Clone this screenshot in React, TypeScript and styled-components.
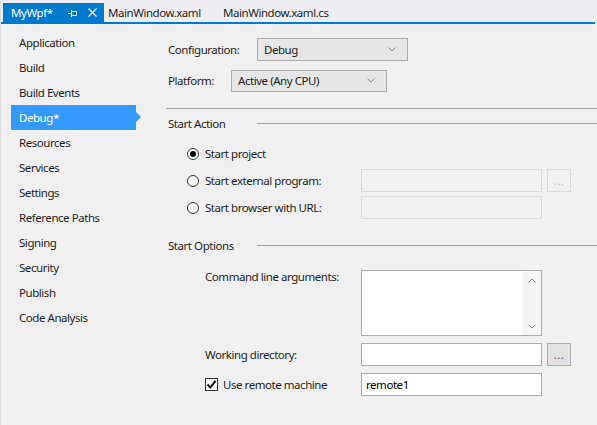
import * as React from 'react';
import styled, { createGlobalStyle } from 'styled-components';

const GlobalStyle = createGlobalStyle`
  html, body {
    margin: 0;
    padding: 0;
    background: #f0f0f0;
  }
`;

const pages = [
  'Application',
  'Build',
  'Build Events',
  'Debug*',
  'Resources',
  'Services',
  'Settings',
  'Reference Paths',
  'Signing',
  'Security',
  'Publish',
  'Code Analysis',
];

const Chevron = ({ up }: { up?: boolean }) => (
  <svg width="8" height="5" viewBox="0 0 8 5">
    <path
      d={up ? 'M0.5 4.5 L4 1 L7.5 4.5' : 'M0.5 0.5 L4 4 L7.5 0.5'}
      fill="none"
      stroke="#8a8a8a"
      strokeWidth="1"
    />
  </svg>
);

export default function App() {
  return (
    <>
      <GlobalStyle />
      <Window>
        <TabStrip>
          <ActiveTab>
            <TabTitle>MyWpf*</TabTitle>
            <TabIcon $gap={11}>
              <svg width="9" height="8" viewBox="0 0 9 8">
                <path
                  d="M0 4.5 H3 M3.5 1 V8 M3.5 2.5 H8.5 V6.5 H3.5"
                  fill="none"
                  stroke="#fff"
                  strokeWidth="1"
                />
              </svg>
            </TabIcon>
            <TabIcon $gap={7}>
              <svg width="9" height="9" viewBox="0 0 9 9">
                <path d="M0.5 0.5 L8.5 8.5 M8.5 0.5 L0.5 8.5" stroke="#fff" strokeWidth="1.2" />
              </svg>
            </TabIcon>
          </ActiveTab>
          <Tab $w={115}>MainWindow.xaml</Tab>
          <Tab>MainWindow.xaml.cs</Tab>
        </TabStrip>

        <Body>
          <Sidebar>
            {pages.map(p => (
              <NavItem key={p} $selected={p === 'Debug*'}>
                {p}
              </NavItem>
            ))}
          </Sidebar>

          <Content>
            <Row $top={14}>
              <Label $w={89}>Configuration:</Label>
              <Dropdown $w={151} $h={23}>
                <span>Debug</span>
                <Chevron />
              </Dropdown>
            </Row>
            <Row $top={8}>
              <Label $w={63}>Platform:</Label>
              <Dropdown $w={156} $h={22}>
                <span>Active (Any CPU)</span>
                <Chevron />
              </Dropdown>
            </Row>

            <Separator />

            <SectionHeader $top={6}>
              <SectionTitle>Start Action</SectionTitle>
            </SectionHeader>

            <Row $top={11} $indent={19}>
              <RadioLabel>
                <Radio $checked />
                Start project
              </RadioLabel>
            </Row>
            <Row $top={4} $indent={19}>
              <RadioLabel>
                <Radio />
                Start external program:
              </RadioLabel>
              <TextBox $w={181} $h={23} $state="disabled" />
              <BrowseButton $disabled>...</BrowseButton>
            </Row>
            <Row $top={4} $indent={19}>
              <RadioLabel>
                <Radio />
                Start browser with URL:
              </RadioLabel>
              <TextBox $w={181} $h={23} $state="disabled" />
            </Row>

            <SectionHeader $top={18}>
              <SectionTitle>Start Options</SectionTitle>
            </SectionHeader>

            <Row $top={17} $indent={37} $align="flex-start">
              <Label $w={156} $lift>
                Command line arguments:
              </Label>
              <TextArea>
                <TextAreaBody />
                <ScrollBar>
                  <Chevron up />
                  <Chevron />
                </ScrollBar>
              </TextArea>
            </Row>
            <Row $top={7} $indent={37}>
              <Label $w={156}>Working directory:</Label>
              <TextBox $w={181} $h={23} $state="normal" />
              <BrowseButton>...</BrowseButton>
            </Row>
            <Row $top={7} $indent={37}>
              <CheckLabel>
                <CheckBox>
                  <svg width="11" height="11" viewBox="0 0 11 11">
                    <path d="M1.5 5.5 L4.2 8.5 L9.5 1.8" fill="none" stroke="#000" strokeWidth="2" />
                  </svg>
                </CheckBox>
                Use remote machine
              </CheckLabel>
              <TextBox $w={181} $h={23} $state="focused">
                remote1
              </TextBox>
            </Row>
          </Content>
        </Body>
      </Window>
    </>
  );
}

const Window = styled.div`
  width: 597px;
  height: 425px;
  box-sizing: border-box;
  border-left: 1px solid #dcdcdc;
  background: #f0f0f0;
  display: flex;
  flex-direction: column;
  overflow: hidden;
  font-family: 'Segoe UI', 'Noto Sans', 'Open Sans', sans-serif;
  font-size: 11.5px;
  letter-spacing: -0.45px;
  color: #1e1e1e;
`;

const TabStrip = styled.div`
  display: flex;
  align-items: stretch;
  height: 19px;
  padding: 3px 0 0 2px;
  margin-right: 2px;
  border-bottom: 2px solid #007acc;
  background: #eeeef2;
`;

const ActiveTab = styled.div`
  display: flex;
  align-items: center;
  width: 101px;
  box-sizing: border-box;
  padding-left: 8px;
  background: #007acc;
  color: #fff;
`;

const TabTitle = styled.span`
  flex: 1;
`;

const TabIcon = styled.span<{ $gap: number }>`
  display: flex;
  margin-right: ${p => p.$gap}px;
`;

const Tab = styled.div<{ $w?: number }>`
  display: flex;
  align-items: center;
  width: ${p => (p.$w ? `${p.$w}px` : 'auto')};
  box-sizing: border-box;
  padding-left: 4px;
  color: #1e1e1e;
`;

const Body = styled.div`
  flex: 1;
  display: flex;
`;

const Sidebar = styled.div`
  width: 149px;
  padding-top: 6px;
  display: flex;
  flex-direction: column;
`;

const NavItem = styled.div<{ $selected?: boolean }>`
  position: relative;
  width: 125px;
  height: 25px;
  line-height: 25px;
  margin-left: 10px;
  padding-left: 8px;
  box-sizing: border-box;
  background: ${p => (p.$selected ? '#3399ff' : 'transparent')};
  color: ${p => (p.$selected ? '#fff' : '#1e1e1e')};

  &::after {
    content: '';
    display: ${p => (p.$selected ? 'block' : 'none')};
    position: absolute;
    right: -5px;
    top: 7px;
    border-left: 5px solid #3399ff;
    border-top: 5px solid transparent;
    border-bottom: 5px solid transparent;
  }
`;

const Content = styled.div`
  flex: 1;
  display: flex;
  flex-direction: column;
  padding-left: 18px;
`;

const Row = styled.div<{ $top: number; $indent?: number; $align?: string }>`
  display: flex;
  align-items: ${p => p.$align ?? 'center'};
  margin-top: ${p => p.$top}px;
  padding-left: ${p => p.$indent ?? 0}px;
  min-height: 23px;
`;

const Label = styled.span<{ $w: number; $lift?: boolean }>`
  width: ${p => p.$w}px;
  flex: none;
  line-height: 16px;
  margin-top: ${p => (p.$lift ? -1 : 0)}px;
`;

const Dropdown = styled.div<{ $w: number; $h: number }>`
  width: ${p => p.$w}px;
  height: ${p => p.$h}px;
  box-sizing: border-box;
  border: 1px solid #acacac;
  background: #e6e6e6;
  display: flex;
  align-items: center;
  justify-content: space-between;
  padding: 0 11px 0 6px;
`;

const Separator = styled.div`
  height: 1px;
  margin: 16px 0 0 -2px;
  background: #a0a0a0;
`;

const SectionHeader = styled.div<{ $top: number }>`
  display: flex;
  align-items: center;
  height: 16px;
  margin-top: ${p => p.$top}px;

  &::after {
    content: '';
    flex: 1;
    height: 1px;
    background: #a0a0a0;
  }
`;

const SectionTitle = styled.span`
  width: 89px;
`;

const RadioLabel = styled.label`
  display: flex;
  align-items: center;
  gap: 6px;
  width: 174px;
  flex: none;
`;

const Radio = styled.span<{ $checked?: boolean }>`
  width: 12px;
  height: 12px;
  box-sizing: border-box;
  border: 1px solid #333;
  border-radius: 50%;
  background: #fff;
  display: flex;
  align-items: center;
  justify-content: center;

  &::after {
    content: '';
    width: 6px;
    height: 6px;
    border-radius: 50%;
    background: ${p => (p.$checked ? '#000' : 'transparent')};
  }
`;

const boxColors = {
  disabled: { border: '#d9d9d9', bg: '#f0f0f0' },
  normal: { border: '#adadad', bg: '#fff' },
  focused: { border: '#7eb4ea', bg: '#fff' },
};

const TextBox = styled.div<{ $w: number; $h: number; $state: keyof typeof boxColors }>`
  width: ${p => p.$w}px;
  height: ${p => p.$h}px;
  box-sizing: border-box;
  border: 1px solid ${p => boxColors[p.$state].border};
  background: ${p => boxColors[p.$state].bg};
  display: flex;
  align-items: center;
  padding-left: 4px;
  color: #000;
`;

const BrowseButton = styled.div<{ $disabled?: boolean }>`
  width: 24px;
  height: 23px;
  margin-left: 5px;
  box-sizing: border-box;
  border: 1px solid ${p => (p.$disabled ? '#d9d9d9' : '#adadad')};
  background: ${p => (p.$disabled ? '#f0f0f0' : '#e1e1e1')};
  color: ${p => (p.$disabled ? '#c4b8c8' : '#6a3f8a')};
  display: flex;
  align-items: flex-end;
  justify-content: center;
  padding-bottom: 5px;
  font-size: 11px;
  line-height: 11px;
  letter-spacing: 0.5px;
`;

const TextArea = styled.div`
  width: 181px;
  height: 66px;
  box-sizing: border-box;
  border: 1px solid #adadad;
  background: #fff;
  display: flex;
`;

const TextAreaBody = styled.div`
  flex: 1;
`;

const ScrollBar = styled.div`
  width: 18px;
  background: #f5f5f5;
  display: flex;
  flex-direction: column;
  align-items: center;
  justify-content: space-between;
  padding: 7px 0 6px;
`;

const CheckLabel = styled.label`
  display: flex;
  align-items: center;
  gap: 5px;
  width: 156px;
  flex: none;
`;

const CheckBox = styled.span`
  width: 13px;
  height: 13px;
  box-sizing: border-box;
  border: 1px solid #333;
  background: #fff;
  display: flex;
  align-items: center;
  justify-content: center;
`;
